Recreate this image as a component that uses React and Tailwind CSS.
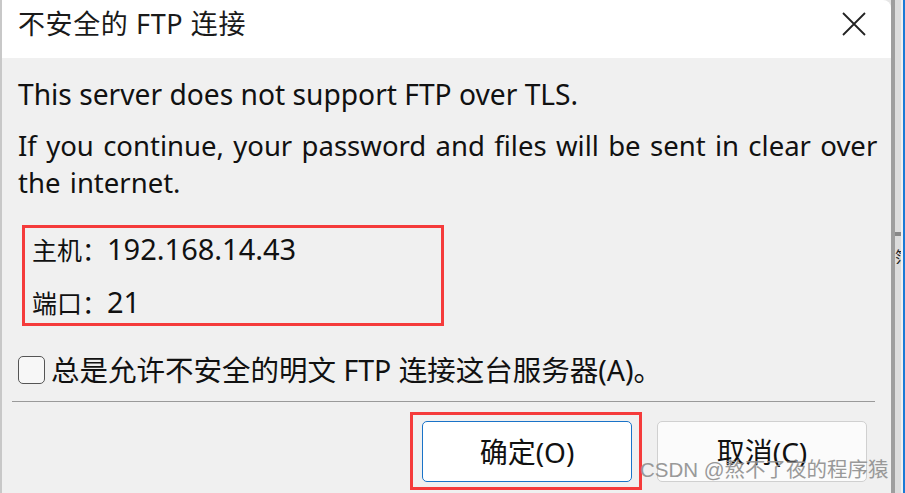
import React from "react";

const font = { fontFamily: '"Noto Sans", "Noto Sans CJK SC", sans-serif' };

export default function App() {
  return (
    <div className="w-[905px] h-[493px] overflow-hidden flex bg-[#e6e6e6] relative" style={font}>
      <div className="w-[891px] h-full flex flex-col border-l-2 border-[#c8c8c8] rounded-tr-[8px] overflow-hidden">
        <div className="h-[58px] bg-white flex items-start justify-between pl-[16px] pr-[24px] pt-[5px]">
          <span className="text-[27px] leading-[38px] text-[#1a1a1a] tracking-[0.6px]">不安全的 FTP 连接</span>
          <svg width="26" height="26" viewBox="0 0 26 26" className="mt-[6px]">
            <path d="M2 2 L24 24 M24 2 L2 24" stroke="#222" strokeWidth="1.8" fill="none" />
          </svg>
        </div>
        <div className="flex-1 bg-[#f0f0f0] flex flex-col pl-[16px] pr-[8px] text-[#111]">
          <p className="text-[28.2px] leading-[37px] mt-[18px] whitespace-nowrap">This server does not support FTP over TLS.</p>
          <p className="text-[27.5px] leading-[37px] mt-[14px] [word-spacing:2.2px] whitespace-nowrap">
            If you continue, your password and files will be sent in clear over
            <br />
            the internet.
          </p>
          <div className="mt-[24px] ml-[4px] w-[422px] h-[101px] border-[3px] border-[#f53b3b] flex flex-col pl-[7px] pt-[3px]">
            <div className="leading-[36px] flex items-baseline">
              <span className="text-[25px]">主机：</span>
              <span className="text-[29px]">192.168.14.43</span>
            </div>
            <div className="leading-[36px] mt-[16px] flex items-baseline">
              <span className="text-[25px]">端口：</span>
              <span className="text-[29px]">21</span>
            </div>
          </div>
          <div className="flex items-center mt-[29px]">
            <div className="w-[27px] h-[28px] rounded-[5px] border-[1.5px] border-[#555] bg-[#f7f7f7] shrink-0" />
            <span className="ml-[6px] text-[28.5px] leading-[30px] whitespace-nowrap">总是允许不安全的明文 FTP 连接这台服务器(A)。</span>
          </div>
          <div className="mt-[16px] h-px bg-[#9a9a9a] ml-[-6px] mr-[8px]" />
          <div className="flex mt-[10px] ml-[392px] gap-[15px] items-start">
            <div className="border-[3px] border-[#f53b3b] pl-[9px] pr-[7px] pt-[6px] pb-[5px]">
              <div className="w-[210px] h-[61px] bg-white border-[1.5px] border-[#1a73c8] rounded-[5px] flex items-center justify-center text-[28px]">确定(O)</div>
            </div>
            <div className="mt-[9px] w-[210px] h-[61px] bg-[#fbfbfb] border border-[#d0d0d0] rounded-[5px] flex items-center justify-center text-[28px]">取消(C)</div>
          </div>
        </div>
      </div>
      <div className="flex-1 flex h-full">
        <div className="w-[4px] bg-[#9e9e9e]" />
        <div className="w-[6px] bg-[#dcdcdc] flex flex-col">
          <div className="h-[232px]" />
          <div className="h-[4px] bg-[#888]" />
          <div className="text-[16px] text-[#222] leading-none mt-[12px] overflow-hidden" style={{ fontFamily: '"Noto Sans CJK SC", sans-serif' }}>箔</div>
        </div>
        <div className="w-[2px] bg-[#f0f0f0]" />
        <div className="w-[2px] bg-[#1a7ad6]" />
      </div>
      <div className="absolute left-[640px] top-[457px] text-[20.5px] leading-[26px] text-[#8f8f8f] opacity-90 whitespace-nowrap" style={{ fontFamily: '"Liberation Sans", "Noto Sans CJK SC", sans-serif' }}>
        CSDN @熬不了夜的程序猿
      </div>
    </div>
  );
}
